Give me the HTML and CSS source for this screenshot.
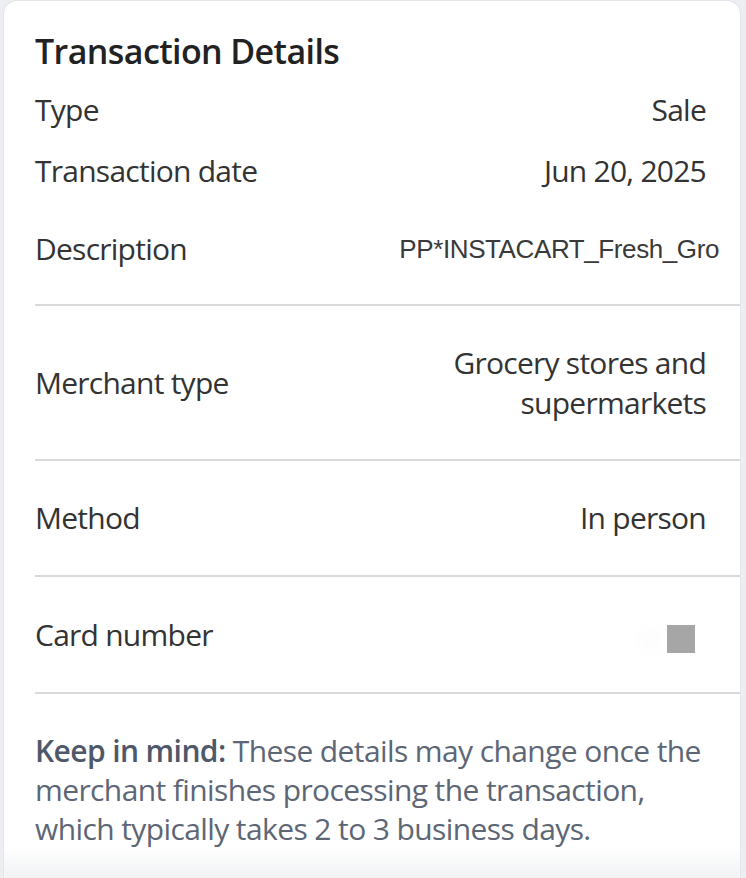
FILE: index.html
```html
<!DOCTYPE html>
<html lang="en">
<head>
<meta charset="utf-8">
<title>Transaction Details</title>
<link rel="stylesheet" href="styles.css">
</head>
<body>
<section class="card">
  <h1 class="title">Transaction Details</h1>
  <div class="group">
    <div class="row row-tight row-first">
      <span class="label">Type</span>
      <span class="value">Sale</span>
    </div>
    <div class="row row-tight">
      <span class="label">Transaction date</span>
      <span class="value">Jun 20, 2025</span>
    </div>
    <div class="row row-desc">
      <span class="label">Description</span>
      <span class="value value-desc">PP*INSTACART_Fresh_Gro</span>
    </div>
  </div>
  <div class="row row-section row-merchant">
    <span class="label">Merchant type</span>
    <span class="value value-multi">Grocery stores and<br>supermarkets</span>
  </div>
  <div class="row row-section">
    <span class="label">Method</span>
    <span class="value">In person</span>
  </div>
  <div class="row row-section row-card">
    <span class="label">Card number</span>
    <span class="value value-mask"><span class="mask"></span></span>
  </div>
  <p class="note"><strong>Keep in mind:</strong> These details may change once the merchant finishes processing the transaction, which typically takes 2 to 3 business days.</p>
</section>
</body>
</html>
```

FILE: styles.css
```css
html, body {
  margin: 0;
  padding: 0;
}
body {
  background: #eceef2;
  font-family: "Open Sans", "Noto Sans", sans-serif;
  color: #2e2e2e;
  height: 878px;
  overflow: hidden;
}
.card {
  margin-left: 3px;
  width: 738px;
  height: 878px;
  box-sizing: border-box;
  background: linear-gradient(to bottom, #ffffff 0, #ffffff 845px, #f1f2f4 878px);
  border: 1px solid #e2e5e9;
  border-bottom: none;
  border-radius: 14px 14px 0 0;
  padding: 0 0 0 31px;
}
.title {
  margin: 0;
  padding-top: 28px;
  font-size: 34px;
  line-height: 44px;
  font-weight: 600;
  letter-spacing: -0.6px;
  color: #222;
}
.row {
  display: flex;
  justify-content: space-between;
  align-items: center;
  padding-right: 34px;
  font-size: 30px;
  line-height: 36px;
  letter-spacing: -0.75px;
  border-bottom: 2px solid #d9d9d9;
}
.row-tight {
  border-bottom: none;
  padding-top: 13px;
  padding-bottom: 12px;
}
.row-first {
  padding-top: 19px;
}
.row-desc {
  padding-top: 30px;
  padding-bottom: 37px;
}
.row-section {
  padding-top: 39px;
  padding-bottom: 39px;
}
.row-merchant {
  padding-top: 37px;
  padding-bottom: 36px;
}
.label {
  color: #333;
}
.value {
  color: #333;
  text-align: right;
}
.value-desc {
  font-family: "Liberation Sans", Arial, sans-serif;
  font-size: 26px;
  letter-spacing: -0.4px;
  color: #3a3a3a;
  margin-right: -13px;
  white-space: nowrap;
}
.value-multi {
  line-height: 40px;
}
.value-mask {
  align-self: flex-start;
  margin-top: 9px;
}
.mask {
  display: block;
  width: 28px;
  height: 28px;
  margin-right: 11px;
  background: #a6a6a6;
  box-shadow: -30px 0 20px -4px #fafafa;
}
.note {
  margin: 0;
  padding: 37px 34px 0 0;
  font-size: 30px;
  line-height: 39px;
  letter-spacing: -0.6px;
  color: #5d6675;
}
.note strong {
  font-weight: 600;
  color: #4f5868;
}
```
